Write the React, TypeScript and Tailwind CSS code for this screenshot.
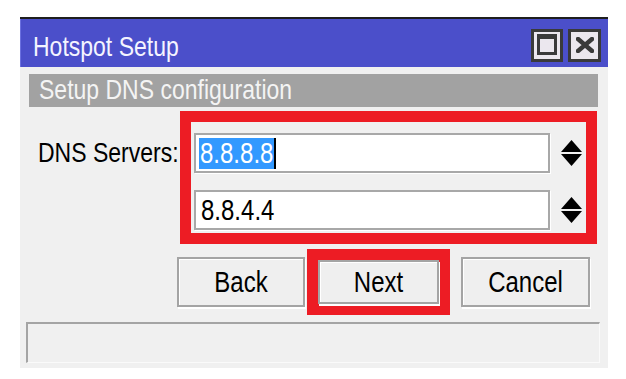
import React from "react";

const font = { fontFamily: '"Liberation Sans", Arial, sans-serif' };

function T({ children, className = "" }: { children: React.ReactNode; className?: string }) {
  return <span className={`inline-block origin-center scale-y-[1.2] ${className}`}>{children}</span>;
}

function Spinner() {
  return (
    <svg width="21" height="27" viewBox="0 0 21 27" className="shrink-0">
      <polygon points="10.5,0 21,12 0,12" fill="#000" />
      <polygon points="0,14 21,14 10.5,26" fill="#000" />
    </svg>
  );
}

function Input({ children }: { children: React.ReactNode }) {
  return (
    <div className="h-[40px] w-[356px] border-2 border-[#a8a8a8] bg-white shadow-[1px_1px_0_#ffffff] flex items-center pl-[3px] text-[24px] text-black leading-none">
      {children}
    </div>
  );
}

function Btn({ label, w, h }: { label: string; w: string; h: string }) {
  return (
    <div
      className={`${w} ${h} border-2 border-[#a4a4a4] bg-[#efefef] shadow-[inset_1px_1px_0_#ffffff,1px_2px_0_#ffffff] flex items-center justify-center text-[24px] text-black leading-none`}
    >
      <T>{label}</T>
    </div>
  );
}

export default function App() {
  return (
    <div className="w-[626px] h-[379px] bg-white overflow-hidden pt-[17px] pl-[20px]" style={font}>
      <div className="w-[588px] h-[351px] flex flex-col bg-[#f0f0f0]">
        {/* title bar */}
        <div className="border-t-2 border-[#1e1e1e]">
          <div className="h-[48px] bg-[#4b4fca] border-l border-[#6b70e0] flex items-center justify-between pl-[12px] pr-[7px]">
            <div className="text-[23px] text-[#f4f4ff] leading-none pt-[6px]">
              <T>Hotspot Setup</T>
            </div>
            <div className="flex gap-[5px] pt-[4px]">
              <div className="w-[32px] h-[33px] border-[3px] border-[#3a3a3a] bg-[#ebe7ee] pt-[2px] pl-[3px]">
                <div className="w-[20px] h-[21px] border-[3px] border-t-[5px] border-[#3a3a3a]" />
              </div>
              <div className="w-[33px] h-[33px] border-[3px] border-[#3a3a3a] bg-[#ebe7ee] flex items-center justify-center">
                <svg width="18" height="16" viewBox="0 0 18 16">
                  <path d="M2 2 L16 14 M16 2 L2 14" stroke="#3a3a3a" strokeWidth="4.5" strokeLinecap="square" />
                </svg>
              </div>
            </div>
          </div>
        </div>

        {/* section header */}
        <div className="mt-[7px] ml-[9px] mr-[10px] h-[33px] bg-[#a2a2a2] flex items-center pl-[10px] text-[23px] text-[#f4f4f4] leading-none">
          <T>Setup DNS configuration</T>
        </div>

        {/* DNS row */}
        <div className="mt-[4px] ml-[9px] flex">
          <div className="w-[151px] pt-[22px]">
            <div className="h-[40px] flex items-center pl-[9px] text-[23px] text-black leading-none">
              <T>DNS Servers:</T>
            </div>
          </div>
          <div className="w-[417px] border-[11px] border-[#ed1c24] pt-[11px] pl-[3px] pr-[3px] pb-[3px] flex flex-col gap-[17px]">
            <div className="flex items-center gap-[11px]">
              <Input>
                <span className="h-[31px] bg-[#3399ff] text-white flex items-center px-[1px]">
                  <T>8.8.8.8</T>
                </span>
                <span className="inline-block w-[2px] h-[31px] bg-black" />
              </Input>
              <Spinner />
            </div>
            <div className="flex items-center gap-[11px]">
              <Input>
                <span className="pl-[2px]">
                  <T>8.8.4.4</T>
                </span>
              </Input>
              <Spinner />
            </div>
          </div>
        </div>

        {/* buttons */}
        <div className="mt-[5px] ml-[157px] flex items-center">
          <Btn label="Back" w="w-[128px]" h="h-[50px]" />
          <div className="ml-[2px] border-[11px] border-[#ed1c24]">
            <Btn label="Next" w="w-[121px]" h="h-[44px]" />
          </div>
          <div className="ml-[11px]">
            <Btn label="Cancel" w="w-[129px]" h="h-[50px]" />
          </div>
        </div>

        {/* status bar */}
        <div className="mt-[7px] ml-[6px] mr-[8px] h-[41px] border-t-2 border-l-2 border-[#a4a4a4] border-r border-b border-r-[#fafafa] border-b-[#fafafa]" />
      </div>
    </div>
  );
}
